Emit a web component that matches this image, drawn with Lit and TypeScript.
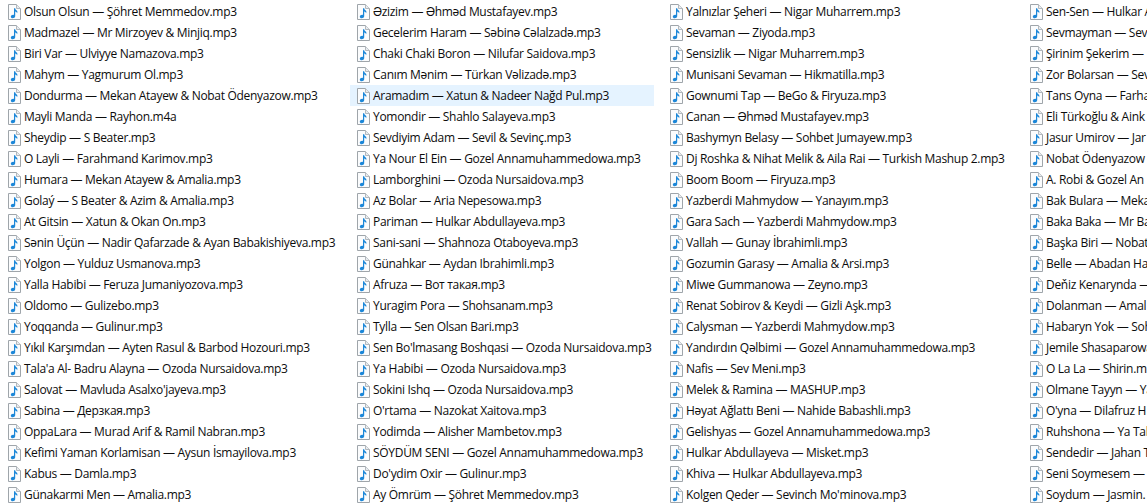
import { LitElement, html, css, svg } from "lit";
import { customElement } from "lit/decorators.js";

const columns: string[][] = [
  ["Olsun Olsun — Şöhret Memmedov.mp3","Madmazel — Mr Mirzoyev & Minjiq.mp3","Biri Var — Ulviyye Namazova.mp3","Mahym — Yagmurum Ol.mp3","Dondurma — Mekan Atayew & Nobat Ödenyazow.mp3","Mayli Manda — Rayhon.m4a","Sheydip — S Beater.mp3","O Layli — Farahmand Karimov.mp3","Humara — Mekan Atayew & Amalia.mp3","Golaý — S Beater & Azim & Amalia.mp3","At Gitsin — Xatun & Okan On.mp3","Sənin Üçün — Nadir Qafarzade & Ayan Babakishiyeva.mp3","Yolgon — Yulduz Usmanova.mp3","Yalla Habibi — Feruza Jumaniyozova.mp3","Oldomo — Gulizebo.mp3","Yoqqanda — Gulinur.mp3","Yıkıl Karşımdan — Ayten Rasul & Barbod Hozouri.mp3","Tala'a Al- Badru Alayna — Ozoda Nursaidova.mp3","Salovat — Mavluda Asalxo'jayeva.mp3","Sabina — Дерзкая.mp3","OppaLara — Murad Arif & Ramil Nabran.mp3","Kefimi Yaman Korlamisan — Aysun İsmayilova.mp3","Kabus — Damla.mp3","Günakarmi Men — Amalia.mp3"],
  ["Əzizim — Əhməd Mustafayev.mp3","Gecelerim Haram — Səbinə Cəlalzadə.mp3","Chaki Chaki Boron — Nilufar Saidova.mp3","Canım Mənim — Türkan Vəlizadə.mp3","Aramadım — Xatun & Nadeer Nağd Pul.mp3","Yomondir — Shahlo Salayeva.mp3","Sevdiyim Adam — Sevil & Sevinç.mp3","Ya Nour El Ein — Gozel Annamuhammedowa.mp3","Lamborghini — Ozoda Nursaidova.mp3","Az Bolar — Aria Nepesowa.mp3","Pariman — Hulkar Abdullayeva.mp3","Sani-sani — Shahnoza Otaboyeva.mp3","Günahkar — Aydan Ibrahimli.mp3","Afruza — Вот такая.mp3","Yuragim Pora — Shohsanam.mp3","Tylla — Sen Olsan Bari.mp3","Sen Bo'lmasang Boshqasi — Ozoda Nursaidova.mp3","Ya Habibi — Ozoda Nursaidova.mp3","Sokini Ishq — Ozoda Nursaidova.mp3","O'rtama — Nazokat Xaitova.mp3","Yodimda — Alisher Mambetov.mp3","SÖYDÜM SENI — Gozel Annamuhammedowa.mp3","Do'ydim Oxir — Gulinur.mp3","Ay Ömrüm — Şöhret Memmedov.mp3"],
  ["Yalnızlar Şeheri — Nigar Muharrem.mp3","Sevaman — Ziyoda.mp3","Sensizlik — Nigar Muharrem.mp3","Munisani Sevaman — Hikmatilla.mp3","Gownumi Tap — BeGo & Firyuza.mp3","Canan — Əhməd Mustafayev.mp3","Bashymyn Belasy — Sohbet Jumayew.mp3","Dj Roshka & Nihat Melik & Aila Rai — Turkish Mashup 2.mp3","Boom Boom — Firyuza.mp3","Yazberdi Mahmydow — Yanayım.mp3","Gara Sach — Yazberdi Mahmydow.mp3","Vallah — Gunay İbrahimli.mp3","Gozumin Garasy — Amalia & Arsi.mp3","Miwe Gummanowa — Zeyno.mp3","Renat Sobirov & Keydi — Gizli Aşk.mp3","Calysman — Yazberdi Mahmydow.mp3","Yandırdın Qəlbimi — Gozel Annamuhammedowa.mp3","Nafis — Sev Meni.mp3","Melek & Ramina — MASHUP.mp3","Həyat Ağlattı Beni — Nahide Babashli.mp3","Gelishyas — Gozel Annamuhammedowa.mp3","Hulkar Abdullayeva — Misket.mp3","Khiva — Hulkar Abdullayeva.mp3","Kolgen Qeder — Sevinch Mo'minova.mp3"],
  ["Sen-Sen — Hulkar A","Sevmayman — Sev","Şirinim Şekerim —","Zor Bolarsan — Sev","Tans Oyna — Farha","Eli Türkoğlu & Aink","Jasur Umirov — Jar","Nobat Ödenyazow","A. Robi & Gozel An","Bak Bulara — Meka","Baka Baka — Mr Ba","Başka Biri — Nobat","Belle — Abadan Ha","Deňiz Kenarynda —","Dolanman — Amal","Habaryn Yok — Soh","Jemile Shasaparowa","O La La — Shirin.m","Olmane Tayyn — Ya","O'yna — Dilafruz H","Ruhshona — Ya Tab","Sendedir — Jahan T","Seni Soymesem —","Soydum — Jasmin."],
];

const icon = svg`<svg class="icon" width="13" height="16" viewBox="0 0 13 16" aria-hidden="true">
  <path d="M.5 .5H8.5L12.5 4.5V15.5H.5Z" fill="#fbfcfd" stroke="#9fa5aa"/>
  <path d="M8.5 .5V4.5H12.5" fill="#e8ecef" stroke="#b3b8bd"/>
  <path d="M6 4.2H7.2C7.4 5.6 8.2 6 9 6.8C9.5 7.4 9.5 8.4 9.1 9.2C8.9 8.5 8.2 7.9 7.2 7.6V12.2C7.2 13.5 6 14.2 4.7 14.2C3.5 14.2 2.8 13.6 2.8 12.7C2.8 11.5 4 10.7 5.1 10.7C5.5 10.7 5.8 10.8 6 10.9Z" fill="#1c87d8"/>
</svg>`;

@customElement("app-root")
export class AppRoot extends LitElement {
  static styles = css`
    :host { display: block; width: 1147px; height: 503px; overflow: hidden; background: #fff; }
    .list { display: grid; grid-template-columns: 349px 313px 360px 124px; height: 503px; padding: 1px 0 0 1px; box-sizing: border-box; }
    .col { display: flex; flex-direction: column; min-width: 0; }
    .col:nth-child(2) { padding-right: 9px; }
    .row { display: flex; align-items: center; flex: 0 0 21px; height: 21px; gap: 3px; padding-left: 7px; white-space: nowrap; overflow: hidden;
      font: 12px "Open Sans", sans-serif; letter-spacing: -0.3px; color: #0c0c0c; }
    .row.hover { background: #e5f3ff; }
    .icon { flex: none; }
  `;
  render() {
    return html`<div class="list">${columns.map((c, ci) => html`<div class="col">${c.map((t, ri) =>
      html`<div class="row ${ci === 1 && ri === 4 ? "hover" : ""}">${icon}<span>${t}</span></div>`)}</div>`)}</div>`;
  }
}
